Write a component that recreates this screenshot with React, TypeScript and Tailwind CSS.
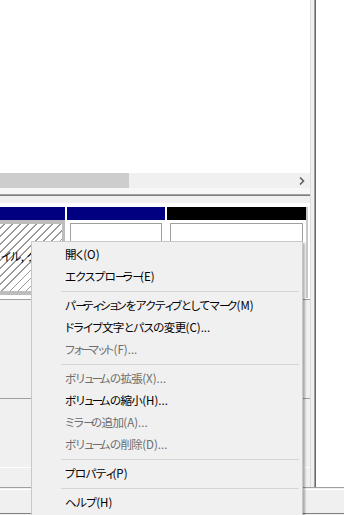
const jp = "font-['Noto_Sans_CJK_JP','Noto_Sans',sans-serif]";

type Item = { t?: string; k?: string; off?: boolean; sep?: boolean };

const items: Item[] = [
  { t: '開く', k: '(O)' },
  { t: 'エクスプローラー', k: '(E)' },
  { sep: true },
  { t: 'パーティションをアクティブとしてマーク', k: '(M)' },
  { t: 'ドライブ文字とパスの変更', k: '(C)...' },
  { t: 'フォーマット', k: '(F)...', off: true },
  { sep: true },
  { t: 'ボリュームの拡張', k: '(X)...', off: true },
  { t: 'ボリュームの縮小', k: '(H)...' },
  { t: 'ミラーの追加', k: '(A)...', off: true },
  { t: 'ボリュームの削除', k: '(D)...', off: true },
  { sep: true },
  { t: 'プロパティ', k: '(P)' },
  { sep: true },
  { t: 'ヘルプ', k: '(H)' },
];

// Yu Gothic UI draws the long mark and small kana narrower than Noto does
const Kana = ({ s }: { s: string }) => (
  <span className="tracking-[-0.6px] [font-feature-settings:'palt']">
    {[...s].map((c, i) =>
      c === 'ー' ? (
        <span key={i} className="tracking-[-3.6px]">{c}</span>
      ) : 'ィョュャッォァ'.includes(c) ? (
        <span key={i} className="tracking-[-2.1px]">{c}</span>
      ) : (
        c
      )
    )}
  </span>
);

const ContextMenu = () => (
  <div className="absolute left-[31px] top-[241px] w-[272px] h-[290px] bg-[#f0f0f0] border border-[#c8c8c8] pt-[2px] shadow-[2px_2px_2px_rgba(0,0,0,0.3)]">
    {items.map((it, i) =>
      it.sep ? (
        <div key={i} className="h-[7px] pt-[3px]">
          <div className="h-px ml-[29px] mr-[3px] bg-[#d5d5d5]" />
        </div>
      ) : (
        <div
          key={i}
          className={`h-[22px] flex items-center pl-[33px] text-[11.5px] leading-none whitespace-nowrap ${
            it.off ? 'text-[#6d6d6d]' : 'text-black'
          }`}
        >
          <Kana s={it.t ?? ''} />
          <span>{it.k}</span>
        </div>
      )
    )}
  </div>
);

const Partition = ({ w, head, children }: { w: string; head: string; children?: React.ReactNode }) => (
  <div className={`${w} flex flex-col`}>
    <div className={`h-[13px] ${head}`} />
    <div className="flex-1 p-[3px]">
      <div className="h-full border border-[#a0a0a0] bg-white">{children}</div>
    </div>
  </div>
);

const App = () => {
  return (
    <div className={`w-[344px] h-[515px] relative overflow-hidden bg-[#f0f0f0] ${jp}`}>
      <div className="flex h-[487px]">
        {/* left column */}
        <div className="w-[310px] flex flex-col">
          {/* volume list pane */}
          <div className="h-[196px] flex flex-col">
            <div className="h-[173px] bg-white" />
            <div className="h-[15px] bg-[#f0f0f0] flex items-center">
              <div className="w-[129px] h-full bg-[#cdcdcd]" />
              <div className="flex-1" />
              <svg width="6" height="8" viewBox="0 0 6 8" className="mr-[5px]">
                <path d="M1 0.5 L4.5 4 L1 7.5" fill="none" stroke="#606060" strokeWidth="1.6" />
              </svg>
            </div>
            <div className="h-[6px] bg-[#f7f7f7]" />
            <div className="h-px bg-[#a0a0a0]" />
            <div className="h-px bg-[#808080]" />
          </div>
          <div className="h-[7px] bg-[#f0f0f0]" />
          <div className="h-px bg-white" />
          <div className="h-[3px] bg-white" />
          {/* disk row */}
          <div className="h-[91px] bg-white flex ml-[-3px]">
            <div className="w-[68px] flex flex-col">
              <div className="h-[13px] bg-[#000080]" />
              <div className="flex-1">
                <div className="h-[75px] bg-[#bdbdbd] pt-[4px] pr-[3px] pb-[4px]">
                  <div className="h-full bg-white [background-image:repeating-linear-gradient(135deg,#ffffff_0_4.6px,#9a9a9a_4.6px_5.7px)] pt-[27px] pl-[4px] overflow-hidden whitespace-nowrap text-[11.5px] leading-none text-black">
                    <Kana s="イル" />, <Kana s="クラッシュ ダンプ" />
                  </div>
                </div>
              </div>
            </div>
            <div className="w-[2px]" />
            <Partition w="w-[98px]" head="bg-[#000080]" />
            <div className="w-[2px]" />
            <Partition w="w-[139px]" head="bg-black" />
            <div className="w-[2px] bg-[#c8c8c8]" />
            <div className="flex-1" />
          </div>
          <div className="h-px bg-white" />
          <div className="h-px bg-[#a0a0a0]" />
          <div className="h-[98px] bg-[#f0f0f0]" />
          <div className="h-px bg-[#a0a0a0]" />
          <div className="h-[68px] bg-[#f0f0f0]" />
          <div className="h-px bg-white" />
          <div className="h-[19px] bg-[#f0f0f0]" />
        </div>
        {/* splitter / right strip */}
        <div className="w-px bg-[#dcdcdc]" />
        <div className="w-[3px] bg-[#f0f0f0]" />
        <div className="w-px bg-[#a0a0a0]" />
        <div className="w-px bg-[#696969]" />
        <div className="flex-1 bg-white" />
      </div>
      <div className="h-px bg-[#a0a0a0]" />
      <div className="h-px bg-[#f0f0f0]" />
      <div className="h-px bg-white" />
      <div className="h-[23px] bg-[#f0f0f0]" />
      <div className="h-px bg-[#808080]" />
      <ContextMenu />
    </div>
  );
};

export default App;
